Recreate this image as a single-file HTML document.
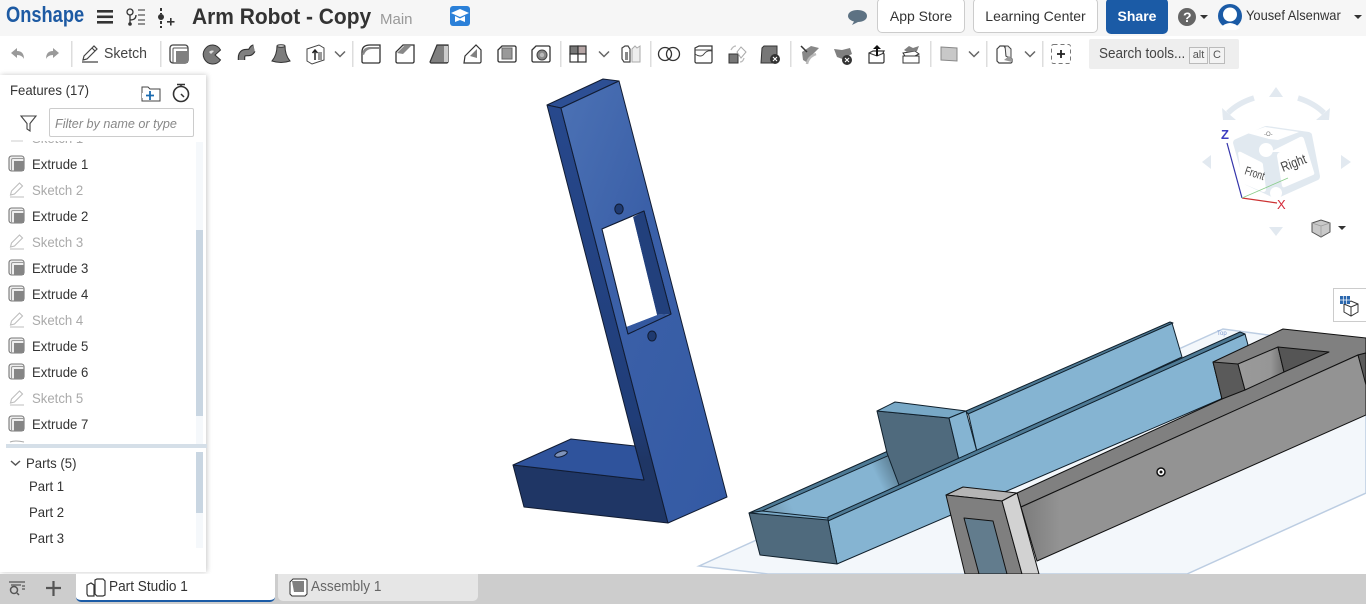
<!DOCTYPE html>
<html><head><meta charset="utf-8"><title>Arm Robot - Copy</title>
<style>
html,body{margin:0;padding:0;background:#fff;width:1366px;height:606px;overflow:hidden;font-family:"Liberation Sans",sans-serif;color:#333}
#top{position:absolute;left:0;top:0;width:1366px;height:36px;background:#f6f6f6}
.t{position:absolute;white-space:nowrap;line-height:1}
.s{transform:scaleX(.94);transform-origin:left center}
.btn{position:absolute;top:-2px;height:33px;background:#fff;border:1px solid #ccc;border-radius:5px;text-align:center;line-height:35px;font-size:14px;color:#333;box-sizing:content-box}
#panel{position:absolute;left:0;top:75px;width:206px;height:497px;background:#fff;box-shadow:1px 0 5px rgba(0,0,0,.22)}
#tabs{position:absolute;left:0;top:574px;width:1366px;height:30px;background:#cdcdcd}
.tab{position:absolute;top:0;height:27px;width:199px;border-radius:0 0 5px 5px}
svg{position:absolute;left:0;top:0}
</style></head><body>
<svg width="1366" height="606" viewBox="0 0 1366 606" style="z-index:0">
<defs>
<linearGradient id="bf" x1="0" y1="0" x2="1" y2="1"><stop offset="0" stop-color="#4c72b5"/><stop offset=".4" stop-color="#3b60a8"/><stop offset="1" stop-color="#345aa4"/></linearGradient>
<linearGradient id="bd" gradientUnits="userSpaceOnUse" x1="0" y1="105" x2="0" y2="523"><stop offset="0" stop-color="#27488c"/><stop offset=".75" stop-color="#203d78"/><stop offset=".85" stop-color="#1f3665"/><stop offset="1" stop-color="#1f3665"/></linearGradient>
<linearGradient id="tr" gradientUnits="userSpaceOnUse" x1="770" y1="532" x2="897" y2="470"><stop offset="0" stop-color="#6f93aa"/><stop offset=".22" stop-color="#85b4d2"/><stop offset=".85" stop-color="#85b4d2"/><stop offset="1" stop-color="#5d7f94"/></linearGradient>
<linearGradient id="gf" gradientUnits="userSpaceOnUse" x1="1021" y1="0" x2="1060" y2="0"><stop offset="0" stop-color="#7b7b7b"/><stop offset="1" stop-color="#939393"/></linearGradient>
<linearGradient id="gw" gradientUnits="userSpaceOnUse" x1="1240" y1="0" x2="1284" y2="0"><stop offset="0" stop-color="#9a9a9a"/><stop offset=".7" stop-color="#969696"/><stop offset="1" stop-color="#6f6f6f"/></linearGradient>
</defs>
<!-- plane -->
<polygon points="699,566 1223,329 1268,335 1366,350 1366,493 1187,574 768,574" fill="#f3f7fb" stroke="#bccde2" stroke-width="1.5"/>
<text x="1217" y="335" font-size="6" fill="#7d9ad0">Top</text>
<!-- blue part -->
<g stroke="#111c33" stroke-width="1" stroke-linejoin="round">
<polygon points="547,105 603,79 619,81 561,108" fill="#2d4f94"/>
<polygon points="547,105 561,108 668,523 524,507 513,465 644,480 635,446" fill="url(#bd)"/>
<polygon points="513,465 571,439 635,446 644,480" fill="#2f539c"/>
<path fill-rule="evenodd" d="M561 108L619 81L727 497L668 523Z M602 229L628 334L671 314L644 211Z" fill="url(#bf)"/>
<polygon points="633,217 644,211 671,314 657,315" fill="#22407c" stroke="none"/>
<polygon points="626,327 657,315 671,314 628,334" fill="#34589f" stroke="none"/>
<polygon points="602,229 633,217 657,315 626,327" fill="#fff" stroke="none"/>
<path d="M602 229L628 334L671 314L644 211Z" fill="none"/>
<ellipse cx="619" cy="209" rx="4.200" ry="5" fill="#1f3a70"/>
<ellipse cx="652" cy="336" rx="4.200" ry="5" fill="#1f3a70"/>
<ellipse cx="561" cy="454" rx="6.500" ry="2.600" transform="rotate(-18 561 454)" fill="#7f93ba"/>
</g>
<!-- light-blue part -->
<g stroke="#10202c" stroke-width="1" stroke-linejoin="round">
<polygon points="968,412 1172,323 1182,357 977,452" fill="#85b4d2"/>
<polygon points="966,411 1170,322 1173,323 968,414" fill="#4e7a95"/>
<polygon points="749,513 888,452 893,454 899,485 828,520" fill="url(#tr)" stroke="none"/>
<polygon points="749,513 888,451 892,454 762,511" fill="#4e7a95"/>
<polygon points="749,513 762,511 828,518 828,521" fill="#7ba9c6"/>
<polygon points="877,411 949,418 959,460 899,485 887,453" fill="#4f6a7d"/>
<polygon points="877,411 895,402 966,411 949,418" fill="#78a8c6"/>
<polygon points="949,418 966,411 977,452 959,460" fill="#85b4d2"/>
<polygon points="828,520 1245,334 1248,345 1221,399 837,564" fill="#85b4d2"/>
<polygon points="828,517 1240,332 1245,334 828,521" fill="#4e7a95"/>
<polygon points="749,513 828,520 837,564 760,555" fill="#4f6a7d"/>
</g>
<!-- gray part -->
<g stroke="#111" stroke-width="1" stroke-linejoin="round">
<polygon points="1213,362 1283,329 1366,338 1366,353 1358,355 1021,507 1017,493 1222,399" fill="#808080"/>
<polygon points="1213,362 1238,364 1245,390 1222,399" fill="#5a5a5a"/>
<polygon points="1238,364 1278,347 1284,372 1245,390" fill="url(#gw)"/>
<polygon points="1278,347 1329,352 1284,372" fill="#555"/>
<polygon points="1021,507 1358,355 1366,380 1366,415 1037,561" fill="url(#gf)"/>
<rect x="1100" y="0" width="0" height="0"/>
<polygon points="1358,355 1366,353 1366,385" fill="#5a5a5a"/>
<polygon points="946,495 963,487 1017,493 1002,501" fill="#b5b5b5"/>
<polygon points="946,495 1002,501 1022,574 965,574" fill="#7f7f7f"/>
<polygon points="964,518 993,521 1007,574 979,574" fill="#627c8d"/>
<polygon points="1002,501 1017,493 1039,574 1022,574" fill="#d2d2d2"/>
<circle cx="1161" cy="472" r="4" fill="#fff" stroke-width="1.500"/><circle cx="1161" cy="472" r="1.500" fill="#111" stroke="none"/>
</g>
<!-- view cube -->
<g fill="#e2e9f0" stroke="none">
<polygon points="1276,87 1283,97 1269,97"/><polygon points="1211,155 1211,169 1202,162"/><polygon points="1341,155 1341,169 1351,162"/><polygon points="1269,227 1283,227 1276,236"/>
<polygon points="1223,120 1222,108 1236,120"/><polygon points="1329,120 1330,108 1316,120"/>
</g>
<path d="M1254 98Q1238 103 1228 113M1298 98Q1314 103 1324 113" fill="none" stroke="#e2e9f0" stroke-width="5.500"/>
<path d="M1233 143q0-3 3-4l27-12q2-1 4-1l42 6q3 1 3 3l8 41q0 3-2 4l-40 18q-2 1-4 0l-28-13q-2-1-2-3z" fill="#e1e9f0"/>
<path d="M1238 153q1-2 3-1l20 10q2 1 2 3l3 24q0 3-3 3l-19-8q-2-1-2-3z M1270 152l30-15q3-1 4 2l10 33q1 2-1 3l-28 12q-2 1-3-1l-5-30q0-3 3-4z M1247 133l18-6 34 5-21 8-9-1z" fill="#fff"/>
<circle cx="1266" cy="150" r="7" fill="#fff"/><circle cx="1276" cy="193" r="6" fill="#fff"/>
<text x="0" y="0" transform="translate(1244,174) rotate(18) scale(.72,1)" font-size="12" fill="#444">Front</text>
<text x="0" y="0" transform="translate(1283,172) rotate(-21) scale(.8,1)" font-size="14" fill="#444">Right</text>
<text x="1264" y="136" font-size="6" fill="#777">-O-</text>
<line x1="1242" y1="198" x2="1227" y2="143" stroke="#33a" stroke-width="1.200"/>
<line x1="1242" y1="198" x2="1277" y2="203" stroke="#c33" stroke-width="1.200"/>
<line x1="1242" y1="198" x2="1288" y2="178" stroke="#8c8" stroke-width=".8"/>
<text x="1221" y="139" font-size="13" font-weight="bold" fill="#3c3cc0">Z</text>
<text x="1277" y="209" font-size="13" fill="#d42a3a">X</text>
<path d="M1312 223l9-3 9 3v9l-9 5-9-5z" fill="#c9c9c9" stroke="#555"/><path d="M1312 223l9 3 9-3M1321 226v11" fill="none" stroke="#999" stroke-width=".7"/>
<polygon points="1338,226 1346,226 1342,230" fill="#333"/>
<rect x="1333.500" y="288.500" width="40" height="33" fill="#fff" stroke="#ccc"/>
<path d="M1344 304l7-3 7 3v8l-7 4-7-4zM1344 304l7 3 7-3M1351 307v9" fill="none" stroke="#333"/>
<rect x="1340" y="296" width="10" height="8" fill="#2a66ad"/><path d="M1343.300 296v8M1346.600 296v8M1340 300h10" stroke="#fff" stroke-width=".7"/>
</svg>

<div id="top"></div>
<div class="t" style="left:6px;top:4px;font-size:22px;font-weight:bold;color:#1d5aa3;transform:scaleX(.83);transform-origin:left center">Onshape</div>
<div class="t" style="left:192px;top:6px;font-size:22px;font-weight:bold;color:#333;transform:scaleX(.952);transform-origin:left center">Arm Robot - Copy</div>
<div class="t" style="left:380px;top:12px;font-size:15px;color:#999">Main</div>
<div class="btn" style="left:877px;width:86px">App Store</div>
<div class="btn" style="left:973px;width:123px">Learning Center</div>
<div class="btn" style="left:1106px;width:60px;height:34px;background:#1b5ba6;border-color:#1b5ba6;color:#fff;font-weight:bold">Share</div>
<div class="t" style="left:1246px;top:8px;font-size:14px;color:#333;transform:scaleX(.92);transform-origin:left center">Yousef Alsenwar</div>
<div class="t" style="left:104px;top:47px;font-size:14.500px;color:#444;transform:scaleX(.97);transform-origin:left center">Sketch</div>
<div style="position:absolute;left:1089px;top:39px;width:150px;height:30px;background:#eee;border-radius:2px"></div>
<div class="t" style="left:1099px;top:47px;font-size:14.500px;color:#444;transform:scaleX(.93);transform-origin:left center">Search tools...</div>
<div class="t" style="left:1189px;top:47px;width:17px;height:15px;border:1px solid #bbb;font-size:11px;line-height:15px;text-align:center;color:#555;background:#f3f3f3">alt</div>
<div class="t" style="left:1209px;top:47px;width:14px;height:15px;border:1px solid #bbb;font-size:11px;line-height:15px;text-align:center;color:#555;background:#f3f3f3">C</div>

<div id="panel"></div>
<div style="position:absolute;left:49px;top:108px;width:143px;height:27px;border:1px solid #ccc;border-radius:2px;background:#fff"></div>
<div class="t" style="left:55px;top:117px;font-size:13px;font-style:italic;color:#888;transform:scaleX(.97);transform-origin:left center">Filter by name or type</div>
<div class="t s" style="left:10px;top:83px;font-size:14px;color:#333">Features (17)</div>
<div style="position:absolute;left:196px;top:142px;width:7px;height:303px;background:#f5f8fb"></div>
<div style="position:absolute;left:196px;top:230px;width:7px;height:186px;background:#c9d6e2"></div>
<div style="position:absolute;left:6px;top:444px;width:201px;height:4px;background:#d5dfe8"></div>
<div style="position:absolute;left:196px;top:452px;width:7px;height:96px;background:#f5f8fb"></div>
<div style="position:absolute;left:196px;top:452px;width:7px;height:61px;background:#c9d6e2"></div>

<div style="position:absolute;left:32px;top:141px;width:120px;height:4px;overflow:hidden"><div class="t s" style="left:0;top:-10px;font-size:14px;color:#aaa">Sketch 1</div></div>
<div class="t s" style="left:32px;top:157px;font-size:14px">Extrude 1</div>
<div class="t s" style="left:32px;top:183px;font-size:14px;color:#aaa">Sketch 2</div>
<div class="t s" style="left:32px;top:209px;font-size:14px">Extrude 2</div>
<div class="t s" style="left:32px;top:235px;font-size:14px;color:#aaa">Sketch 3</div>
<div class="t s" style="left:32px;top:261px;font-size:14px">Extrude 3</div>
<div class="t s" style="left:32px;top:287px;font-size:14px">Extrude 4</div>
<div class="t s" style="left:32px;top:313px;font-size:14px;color:#aaa">Sketch 4</div>
<div class="t s" style="left:32px;top:339px;font-size:14px">Extrude 5</div>
<div class="t s" style="left:32px;top:365px;font-size:14px">Extrude 6</div>
<div class="t s" style="left:32px;top:391px;font-size:14px;color:#aaa">Sketch 5</div>
<div class="t s" style="left:32px;top:417px;font-size:14px">Extrude 7</div>
<div class="t s" style="left:26px;top:456px;font-size:14px">Parts (5)</div>
<div class="t s" style="left:29px;top:479px;font-size:14px">Part 1</div>
<div class="t s" style="left:29px;top:505px;font-size:14px">Part 2</div>
<div class="t s" style="left:29px;top:531px;font-size:14px">Part 3</div>

<div id="tabs">
<div class="tab" style="left:76px;background:#fff;border-bottom:2px solid #1b5ba6;height:26px"></div>
<div class="tab" style="left:278px;width:200px;background:#e6e6e6"></div>
<div class="t s" style="left:109px;top:6px;font-size:14.500px;color:#333">Part Studio 1</div>
<div class="t s" style="left:311px;top:6px;font-size:14.500px;color:#666">Assembly 1</div>
</div>

<svg width="1366" height="606" viewBox="0 0 1366 606" style="z-index:5">
<defs>
<symbol id="ext" overflow="visible"><rect x="0" y="0" width="15" height="15" rx="2.500" fill="#eee" stroke="#777" stroke-width="1.100"/><path d="M2.500 15V4a1.500 1.500 0 0 1 1.500-1.500h11" fill="none" stroke="#999"/><rect x="5" y="5" width="10" height="10" fill="#858585"/></symbol>
<symbol id="pen" overflow="visible"><path d="M1 15h14M1.500 13l1-4 8-8 3 3-8 8z" fill="none" stroke="#bdbdbd" stroke-width="1.100"/></symbol>
<symbol id="chev" overflow="visible"><path d="M-5 -2.500l5 5 5-5" fill="none" stroke="#666" stroke-width="1.500"/></symbol>
<symbol id="box" overflow="visible"><path d="M-9-4l4-4h13l1 1v14l-1 1H-8l-1-1z" fill="#fff" stroke="#333" stroke-width="1.300"/></symbol>
</defs>
<!-- top bar icons -->
<g fill="#333">
<rect x="97" y="10" width="16" height="2.600"/><rect x="97" y="15.500" width="16" height="2.600"/><rect x="97" y="21" width="16" height="2.600"/>
</g>
<g fill="none" stroke="#333" stroke-width="1.300">
<circle cx="130" cy="12" r="3"/><path d="M130 15v9M130 20q6 0 6-5"/>
<path d="M138 10h7M138 15h7M138 20h7M138 24h7" stroke-width="1.200" stroke="#555"/>
</g>
<circle cx="130" cy="24" r="1.800" fill="#333"/>
<g fill="#333"><circle cx="161" cy="17" r="3"/><rect x="160" y="8" width="2" height="3"/><rect x="160" y="13" width="2" height="1"/><rect x="160" y="21" width="2" height="3"/><rect x="160" y="26" width="2" height="2"/><rect x="167" y="21" width="7.500" height="1.600"/><rect x="170" y="18" width="1.600" height="7.500"/></g>
<rect x="450" y="6" width="20" height="20" rx="3" fill="#2b80d8"/>
<path d="M451 13l9-4 9 4-9 4z" fill="#fff"/><path d="M455 16v6l5-2 5 2v-6l-5 2.500z" fill="#fff"/>
<path d="M848 16c0-4 4.500-6 9.500-6s9.500 2 9.500 6-4.500 6-9 6l-6 3 2-3.500c-3.500-1-6-3-6-5.500z" fill="#5d7283"/>
<circle cx="1187" cy="17" r="9" fill="#666"/><text x="1183" y="22" font-size="14" font-weight="bold" fill="#fff">?</text>
<polygon points="1200,15 1208,15 1204,19" fill="#333"/>
<circle cx="1230" cy="16" r="12" fill="#1b5ba6"/><circle cx="1230" cy="14.500" r="7" fill="#fff"/><path d="M1220 28q10-10 20 0l-4 2h-12z" fill="#fff"/>
<polygon points="1354,15 1362,15 1358,19" fill="#333"/>

<!-- separators -->
<g fill="#ddd"><rect x="71" y="41" width="1.500" height="26"/><rect x="160" y="41" width="1.500" height="26"/><rect x="352" y="41" width="1.500" height="26"/><rect x="560" y="41" width="1.500" height="26"/><rect x="650" y="41" width="1.500" height="26"/><rect x="790" y="41" width="1.500" height="26"/><rect x="930" y="41" width="1.500" height="26"/><rect x="986" y="41" width="1.500" height="26"/><rect x="1042" y="41" width="1.500" height="26"/></g>
<!-- undo redo -->
<path d="M11 53l6-5v3q7 0 7 8-2-4-7-4v3z" fill="#9a9a9a"/>
<path d="M59 53l-6-5v3q-7 0-7 8 2-4 7-4v3z" fill="#9a9a9a"/>
<!-- sketch -->
<path d="M82 62h16M83 60l1-4 10-10 3 3-10 10zM92 48l3 3" fill="none" stroke="#444" stroke-width="1.200"/>
<!-- extrude -->
<g transform="translate(170,45)"><rect x="0" y="0" width="18" height="18" rx="3" fill="#fff" stroke="#444" stroke-width="1.300"/><path d="M3 18V4a1 1 0 0 1 1-1h14" fill="none" stroke="#555"/><rect x="6" y="6" width="12" height="12" fill="#808080"/></g>
<!-- revolve -->
<path d="M213 45a9.500 9.500 0 1 0 7.500 15l-5.500-5 5.500-5a9.500 9.500 0 0 0-7.500-5z" fill="#7a7a7a" stroke="#333"/><path d="M209 52a4 4 0 0 1 5-1l-3 3z" fill="#ddd"/>
<!-- sweep -->
<path d="M241.500 60v-2c0-6 4-5.500 7-5.500 4 0 3-4 5.500-4.500" fill="none" stroke="#333" stroke-width="7.500"/><path d="M241.500 60v-2c0-6 4-5.500 7-5.500 4 0 3-4 5.500-4.500" fill="none" stroke="#808080" stroke-width="5.200"/>
<!-- loft -->
<path d="M277 46h8q0 9 5 15-9 3-18 0 5-6 5-15z" fill="#7c7c7c" stroke="#333"/><ellipse cx="281" cy="46" rx="4" ry="1.300" fill="#ccc" stroke="#333" stroke-width=".8"/>
<!-- thicken -->
<path d="M307 49l12-4 5 3v12l-12 4-5-3z" fill="#fff" stroke="#444"/><path d="M315 60v-9M312.500 53l2.500-3 2.500 3" fill="none" stroke="#222" stroke-width="1.500"/><rect x="318" y="52" width="4" height="8" fill="#999"/>
<use href="#chev" x="340" y="54"/>
<use href="#chev" x="604" y="54"/>
<use href="#chev" x="974" y="54"/>
<use href="#chev" x="1030" y="54"/>
<!-- fillet -->
<path d="M362 62V52q0-7 8-7h10v17l-1 1h-16z" fill="#fff" stroke="#333" stroke-width="1.300"/><path d="M362 54q1-7 8-7h9v2h-7q-6 0-8 6z" fill="#888"/>
<!-- chamfer -->
<path d="M396 62V52l7-7h11v17l-1 1h-16z" fill="#fff" stroke="#333" stroke-width="1.300"/><path d="M397 53l7-7h7l-8 8z" fill="#888"/>
<!-- draft -->
<path d="M430 62l7-17h11v17l-1 1h-16z" fill="#808080" stroke="#333" stroke-width="1.200"/><rect x="444" y="46" width="4" height="16" fill="#ccc"/>
<!-- rib -->
<path d="M465 56l11-11 5 5v12l-1 1h-16z" fill="#fff" stroke="#333" stroke-width="1.200"/><path d="M470 56l7-7v9z" fill="#808080"/>
<!-- shell -->
<use href="#box" x="507" y="54"/><rect x="502" y="48" width="10" height="11" fill="#999" stroke="#666"/>
<!-- hole -->
<use href="#box" x="541" y="54"/><circle cx="542" cy="55" r="5" fill="#888" stroke="#444"/><circle cx="542" cy="55" r="2.200" fill="#bbb"/>
<!-- pattern -->
<g stroke="#333" stroke-width="1.200"><rect x="570" y="46" width="8" height="8" fill="#777"/><rect x="578" y="46" width="8" height="8" fill="#b5a5a5"/><rect x="570" y="54" width="8" height="8" fill="#fff"/><rect x="578" y="54" width="8" height="8" fill="#fff"/></g>
<!-- mirror -->
<path d="M622 48l3-2h3l2 3v13h-6l-2-3z" fill="#fff" stroke="#444" stroke-width="1.200"/><path d="M632 62V49l3-3 2 2 3-2v16z" fill="#eee" stroke="#aaa"/><rect x="625" y="52" width="3" height="8" fill="#888"/>
<!-- boolean -->
<circle cx="665" cy="54" r="6.500" fill="none" stroke="#333" stroke-width="1.300"/><circle cx="673" cy="54" r="6.500" fill="none" stroke="#333" stroke-width="1.300"/>
<!-- split -->
<path d="M695 48l4-2h13v16l-1 1h-15l-1-1z" fill="#fff" stroke="#333" stroke-width="1.200"/><path d="M695 54q6 4 9 0t8-3M695 50h17" fill="none" stroke="#444"/>
<!-- transform -->
<rect x="729" y="54" width="9" height="9" fill="#777" stroke="#333"/><path d="M741 47l5 5-5 6-4-6z" fill="#fff" stroke="#aaa"/><path d="M731 50q2-4 5-4M744 58q-1 4-4 4" fill="none" stroke="#bbb" stroke-width="1.300"/>
<!-- delete -->
<path d="M762 48l2-2h13v12h-3v5h-13z" fill="#777" stroke="#333"/><circle cx="775" cy="59" r="5" fill="#333"/><path d="M773 57l4 4m0-4l-4 4" stroke="#fff" stroke-width="1.100"/>
<!-- surfaces -->
<path d="M802 52l9-6 8 2-6 6-5 9-5-3z" fill="#888"/><path d="M801 46l6 6" stroke="#333" stroke-width="1.500"/><path d="M807 64q1-7 9-10" fill="none" stroke="#bbb" stroke-width="2.500"/>
<path d="M834 49l8 1 8-2 2 6-4 2-3 4-8-3z" fill="#808080"/><circle cx="847" cy="60" r="5" fill="#333"/><path d="M845 58l4 4m0-4l-4 4" stroke="#fff" stroke-width="1.100"/>
<path d="M869 53l4-2h11l-1 2 1 1v8l-1 1h-14v-9z" fill="#fff" stroke="#333" stroke-width="1.200"/><path d="M869 53l8 3 7-3" fill="none" stroke="#333"/><path d="M877 56v-8" stroke="#111" stroke-width="2"/><polygon points="873,49 881,49 877,45" fill="#111"/>
<path d="M903 53l12-2 4 3-4 2h-10z" fill="#fff" stroke="#333"/><path d="M903 56h16v7h-16z" fill="#fff" stroke="#333"/><path d="M904 50l5-4 4 2 6-2-2 5-10 1z" fill="#808080"/>
<!-- plane -->
<path d="M941 47l16 1v13l-16-1z" fill="#c8c8c8" stroke="#888"/>
<!-- part -->
<path d="M997 49l3-3h4l2 3v7l6 3v3l-1 1h-12l-2-2z" fill="#fff" stroke="#444" stroke-width="1.200"/><path d="M1005 46h3l3 3v10l-5-3z" fill="#eee" stroke="#444"/><path d="M1004 60l5-4 3 3v3z" fill="#999"/>
<!-- add -->
<rect x="1051.500" y="44.500" width="19" height="19" rx="2" fill="none" stroke="#777" stroke-dasharray="4 3"/>
<path d="M1061 50v8M1057 54h8" stroke="#222" stroke-width="1.800"/>
<!-- panel -->
<path d="M142 87h6l2 2h10v12h-18z" fill="#fff" stroke="#444"/><path d="M150 91v9M146 95.500h8" stroke="#1b6bb0" stroke-width="1.800"/>
<rect x="142" y="93" width="4" height="5" fill="#fff"/>
<circle cx="181" cy="94" r="7.500" fill="#fff" stroke="#333" stroke-width="1.600"/><path d="M177 84.500h8M181 85v2M181 94l3 3" stroke="#333" stroke-width="1.500"/>
<path d="M21 116h15l-6 7.500V131l-3-2v-5.500z" fill="none" stroke="#444" stroke-width="1.100"/>
<path d="M11 141h12" stroke="#ccc" stroke-width="1"/>
<use href="#ext" x="9" y="156"/><use href="#pen" x="9" y="182"/><use href="#ext" x="9" y="208"/><use href="#pen" x="9" y="234"/><use href="#ext" x="9" y="260"/><use href="#ext" x="9" y="286"/><use href="#pen" x="9" y="312"/><use href="#ext" x="9" y="338"/><use href="#ext" x="9" y="364"/><use href="#pen" x="9" y="390"/><use href="#ext" x="9" y="416"/>
<path d="M10 442q5-2 14 0" stroke="#aaa" fill="none"/>
<path d="M11 461l4.500 4 4.500-4" fill="none" stroke="#555" stroke-width="1.500"/>
<!-- tab bar -->
<path d="M9 582h16M11 585h10M22 586h3M22 589h3" stroke="#555" stroke-width="1.300" fill="none"/><circle cx="14" cy="590" r="3.500" fill="none" stroke="#555" stroke-width="1.500"/><path d="M17 593l2 2" stroke="#555" stroke-width="1.500"/>
<path d="M46 588h15M53.500 581v15" stroke="#555" stroke-width="2.200"/>
<path d="M87 585l4-2 3 2v11h-6l-1-2z M95 594v-14l2-1h6l2 2v14l-2 1h-6z" fill="#fff" stroke="#333" stroke-width="1.200"/>
<path d="M290 582l3-3h13l1 1v14l-2 2h-13l-2-2z" fill="#fff" stroke="#333"/><path d="M292 581h12v11h-10z" fill="#808080"/>
</svg>
</body></html>
